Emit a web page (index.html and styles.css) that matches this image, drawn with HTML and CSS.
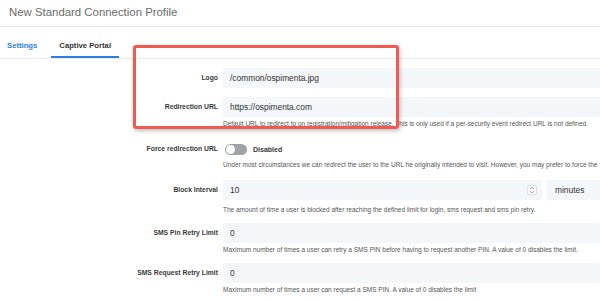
FILE: index.html
```html
<!DOCTYPE html>
<html lang="en">
<head>
<meta charset="utf-8">
<title>New Standard Connection Profile</title>
<link rel="stylesheet" href="styles.css">
</head>
<body>
<div class="page">
  <header class="title">New Standard Connection Profile</header>
  <nav class="tabs">
    <a class="tab">Settings</a>
    <a class="tab active">Captive Portal</a>
  </nav>
  <div class="form">
    <div class="row row-tight">
      <label class="label">Logo</label>
      <div class="field">
        <div class="input">/common/ospimenta.jpg</div>
      </div>
    </div>
    <div class="row row-loose">
      <label class="label">Redirection URL</label>
      <div class="field">
        <div class="input">https://ospimenta.com</div>
        <p class="help">Default URL to redirect to on registration/mitigation release. This is only used if a per-security event redirect URL is not defined.</p>
      </div>
    </div>
    <div class="row row-loose">
      <label class="label">Force redirection URL</label>
      <div class="field">
        <div class="switch-line">
          <span class="switch"><span class="knob"></span></span>
          <span class="switch-text">Disabled</span>
        </div>
        <p class="help help-close">Under most circumstances we can redirect the user to the URL he originally intended to visit. However, you may prefer to force the</p>
      </div>
    </div>
    <div class="row">
      <label class="label">Block Interval</label>
      <div class="field">
        <div class="combo">
          <div class="input number">10
            <span class="spin">
              <svg width="6" height="8" viewBox="0 0 6 8"><path d="M1 3 L3 1 L5 3 M1 5 L3 7 L5 5" fill="none" stroke="#8a8f96" stroke-width="0.8"/></svg>
            </span>
          </div>
          <div class="input unit">minutes</div>
        </div>
        <p class="help help-wide">The amount of time a user is blocked after reaching the defined limit for login, sms request and sms pin retry.</p>
      </div>
    </div>
    <div class="row">
      <label class="label">SMS Pin Retry Limit</label>
      <div class="field">
        <div class="input">0</div>
        <p class="help">Maximum number of times a user can retry a SMS PIN before having to request another PIN. A value of 0 disables the limit.</p>
      </div>
    </div>
    <div class="row">
      <label class="label">SMS Request Retry Limit</label>
      <div class="field">
        <div class="input">0</div>
        <p class="help">Maximum number of times a user can request a SMS PIN. A value of 0 disables the limit</p>
      </div>
    </div>
  </div>
  <div class="callout"></div>
</div>
</body>
</html>
```
FILE: styles.css
```css
html, body {
  margin: 0;
  padding: 0;
  background: #ffffff;
  overflow: hidden;
}
body {
  width: 600px;
  height: 300px;
  font-family: "Liberation Sans", Arial, sans-serif;
  color: #333;
}
.page {
  position: relative;
  width: 600px;
  height: 300px;
  overflow: hidden;
}
.title {
  height: 27px;
  line-height: 25px;
  padding-left: 9px;
  font-size: 11.4px;
  color: #6a6a6a;
  border-bottom: 1px solid #e8e8e8;
  box-sizing: border-box;
}
.tabs {
  display: flex;
  gap: 6px;
  margin-left: -1px;
  border-bottom: 1px solid #ececec;
}
.tab {
  padding: 14px 8px 5px;
  line-height: 10px;
  font-size: 7.7px;
  font-weight: bold;
  color: #2b7de9;
  border-bottom: 2px solid transparent;
}
.tab.active {
  color: #333;
  border-bottom-color: #2b7de9;
}
.form {
  padding-top: 9px;
}
.row {
  display: grid;
  grid-template-columns: 218px 1fr;
  column-gap: 5px;
  margin-bottom: 9px;
}
.row-tight {
  margin-bottom: 9px;
}
.row-loose {
  margin-bottom: 11px;
}
.label {
  text-align: right;
  font-size: 6.8px;
  font-weight: bold;
  color: #3a3a3a;
  line-height: 20px;
  white-space: nowrap;
}
.field {
  min-width: 0;
}
.input {
  height: 20px;
  line-height: 20px;
  background: #f4f7fa;
  border-radius: 2px;
  padding-left: 7px;
  font-size: 8.4px;
  color: #333;
  white-space: nowrap;
  box-sizing: border-box;
}
.help {
  margin: 3px 0 0;
  line-height: 8px;
  font-size: 6.5px;
  color: #555;
  white-space: nowrap;
}
.help-close {
  margin-top: 2px;
}
.help-wide {
  margin-top: 6px;
}
.switch-line {
  display: flex;
  align-items: center;
  height: 20px;
  gap: 6px;
  padding-left: 2px;
}
.switch {
  width: 22px;
  height: 11px;
  border-radius: 6px;
  background: #9ea3a8;
  display: flex;
  align-items: center;
  padding-left: 1px;
  box-sizing: border-box;
}
.knob {
  width: 9px;
  height: 9px;
  border-radius: 50%;
  background: #fff;
}
.switch-text {
  font-size: 7px;
  font-weight: bold;
  color: #3a3a3a;
}
.combo {
  display: flex;
  gap: 5px;
}
.number {
  width: 319px;
  display: flex;
  align-items: center;
  justify-content: space-between;
  padding-right: 5px;
}
.spin {
  width: 10px;
  height: 10px;
  border: 1px solid #dde1e6;
  border-radius: 2px;
  background: #f9fafb;
  display: flex;
  align-items: center;
  justify-content: center;
  box-sizing: border-box;
}
.unit {
  flex: 1;
  padding-left: 8px;
}
.callout {
  position: absolute;
  left: 133px;
  top: 45px;
  width: 266px;
  height: 84px;
  border: 3px solid #f25a4f;
  border-radius: 3px;
  box-sizing: border-box;
  box-shadow: 1px 2px 4px rgba(0, 0, 0, 0.25);
}
```
